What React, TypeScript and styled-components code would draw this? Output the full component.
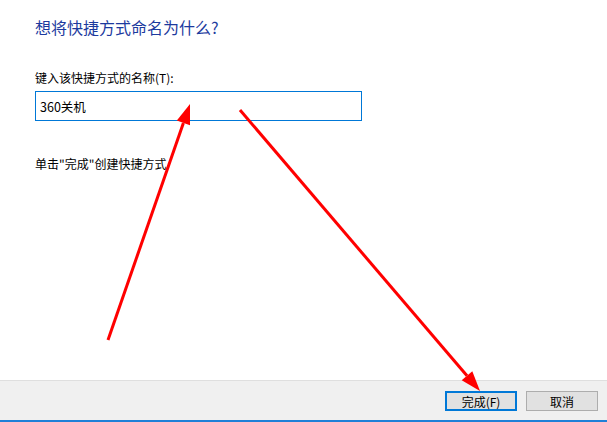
import * as React from "react";
import styled, { createGlobalStyle } from "styled-components";

const GlobalStyle = createGlobalStyle`
  html, body {
    margin: 0;
    padding: 0;
    background: #ffffff;
  }
  body {
    font-family: "Microsoft YaHei", "Noto Sans CJK SC", "Noto Sans", sans-serif;
  }
`;

const Window = styled.div`
  position: relative;
  width: 607px;
  height: 422px;
  display: flex;
  flex-direction: column;
  overflow: hidden;
  background: #ffffff;
`;

const Content = styled.div`
  flex: 1;
  display: flex;
  flex-direction: column;
  padding: 16px 35px 0 35px;
`;

const Heading = styled.div`
  font-size: 16px;
  line-height: 22px;
  color: #1c3a9e;
`;

const Label = styled.div`
  margin-top: 32px;
  font-size: 12px;
  line-height: 16px;
  color: #000000;
`;

const NameInput = styled.div`
  margin-top: 5px;
  width: 321px;
  height: 28px;
  border: 1px solid #0078d7;
  display: flex;
  align-items: center;
  padding-left: 4px;
  box-sizing: content-box;
  font-size: 12.5px;
  color: #000000;
`;

const Hint = styled.div`
  margin-top: 35px;
  font-size: 12px;
  line-height: 16px;
  color: #000000;
`;

const Footer = styled.div`
  height: 40px;
  border-top: 1px solid #dfdfdf;
  background: #f0f0f0;
  display: flex;
  justify-content: flex-end;
  align-items: flex-start;
  gap: 9px;
  padding: 10px 9px 0 0;
  box-sizing: border-box;
`;

const Button = styled.div<{ $primary?: boolean }>`
  width: 72px;
  height: 20px;
  box-sizing: border-box;
  background: #e1e1e1;
  border: ${(p) => (p.$primary ? "2px solid #0078d7" : "1px solid #adadad")};
  display: flex;
  align-items: center;
  justify-content: center;
  font-size: 12px;
  color: #000000;
`;

const TaskbarEdge = styled.div`
  height: 2px;
  background: #1f80d8;
`;

const Overlay = styled.svg`
  position: absolute;
  left: 0;
  top: 0;
  pointer-events: none;
`;

export default function App() {
  return (
    <>
      <GlobalStyle />
      <Window>
        <Content>
          <Heading>想将快捷方式命名为什么?</Heading>
          <Label>键入该快捷方式的名称(T):</Label>
          <NameInput>360关机</NameInput>
          <Hint>单击"完成"创建快捷方式</Hint>
        </Content>
        <Footer>
          <Button $primary>完成(F)</Button>
          <Button>取消</Button>
        </Footer>
        <TaskbarEdge />
        <Overlay width="607" height="422" viewBox="0 0 607 422">
          <line x1="108" y1="340" x2="183.4" y2="122.9" stroke="#ff0000" strokeWidth="3" />
          <polygon points="190,104 190,125.2 176.8,120.6" fill="#ff0000" />
          <line x1="240" y1="110" x2="467" y2="375.8" stroke="#ff0000" strokeWidth="3" />
          <polygon points="480,391 461.7,380.3 472.3,371.3" fill="#ff0000" />
        </Overlay>
      </Window>
    </>
  );
}
